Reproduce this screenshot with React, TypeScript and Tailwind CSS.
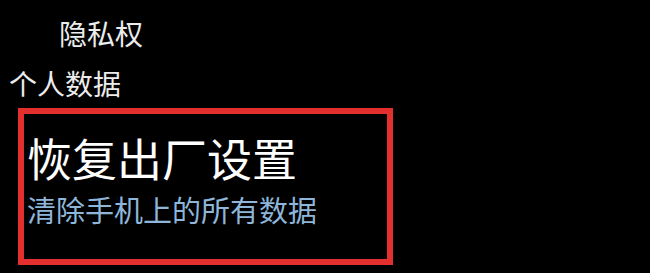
import React from 'react';

const App: React.FC = () => {
  return (
    <div
      className="w-[650px] h-[273px] bg-black overflow-hidden text-white"
      style={{ fontFamily: '"Noto Sans CJK SC", "Noto Sans", sans-serif' }}
    >
      <div className="pl-[59px] pt-[19px] text-[28px] leading-[28px] text-[#ececec]">隐私权</div>
      <div className="pl-[9px] mt-[22px] text-[28px] leading-[28px] text-[#ececec]">个人数据</div>

      <div className="ml-[18px] mt-[11px] w-[375px] h-[157px] border-[6px] border-[#e3302f] pl-[3px] pt-[21px]">
        <div className="text-[45px] leading-[45px] text-white">恢复出厂设置</div>
        <div className="mt-[15px] text-[29px] leading-[29px] text-[#8db6da]">清除手机上的所有数据</div>
      </div>
    </div>
  );
};

export default App;
